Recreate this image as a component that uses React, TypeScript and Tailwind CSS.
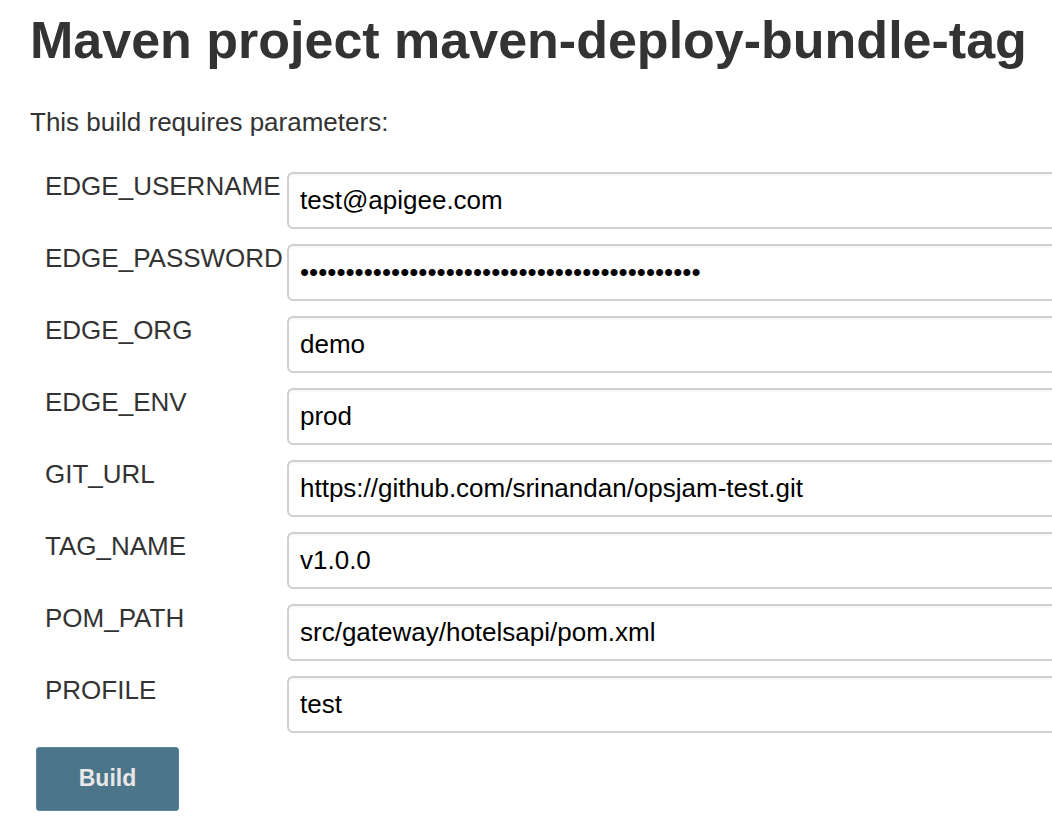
import React from 'react';

interface Param {
  name: string;
  value: string;
}

const params: Param[] = [
  { name: 'EDGE_USERNAME', value: 'test@apigee.com' },
  { name: 'EDGE_PASSWORD', value: '•'.repeat(44) },
  { name: 'EDGE_ORG', value: 'demo' },
  { name: 'EDGE_ENV', value: 'prod' },
  { name: 'GIT_URL', value: 'https://github.com/srinandan/opsjam-test.git' },
  { name: 'TAG_NAME', value: 'v1.0.0' },
  { name: 'POM_PATH', value: 'src/gateway/hotelsapi/pom.xml' },
  { name: 'PROFILE', value: 'test' },
];

export default function App() {
  return (
    <div
      className="w-[1052px] h-[834px] overflow-hidden bg-white pl-[30px] pt-[11px]"
      style={{ fontFamily: '"Liberation Sans", Arial, sans-serif' }}
    >
      <h1 className="text-[52px] font-bold leading-[1.15] text-[#333] whitespace-nowrap">
        Maven project maven-deploy-bundle-tag
      </h1>
      <p className="mt-[37px] text-[26px] leading-[1.15] text-[#333]">
        This build requires parameters:
      </p>

      <div className="mt-[34px] flex flex-col gap-[15px]">
        {params.map(p => (
          <div key={p.name} className="flex items-start">
            <div className="w-[257px] shrink-0 pl-[15px] text-[26px] leading-[1.15] text-[#333]">
              {p.name}
            </div>
            <div className="w-[820px] shrink-0 h-[57px] flex items-center border-2 border-[#cfcfcf] rounded-[6px] bg-white pl-[11px] shadow-[inset_0_2px_2px_rgba(0,0,0,0.04)]">
              <span className="text-[26px] leading-none text-black">{p.value}</span>
            </div>
          </div>
        ))}
      </div>

      <button className="mt-[14px] ml-[6px] w-[143px] h-[64px] flex items-center justify-center rounded-[3px] bg-[#4d7589] border border-[#5b87a0] text-[23px] font-bold text-[#e8e8e8]">
        Build
      </button>
    </div>
  );
}
